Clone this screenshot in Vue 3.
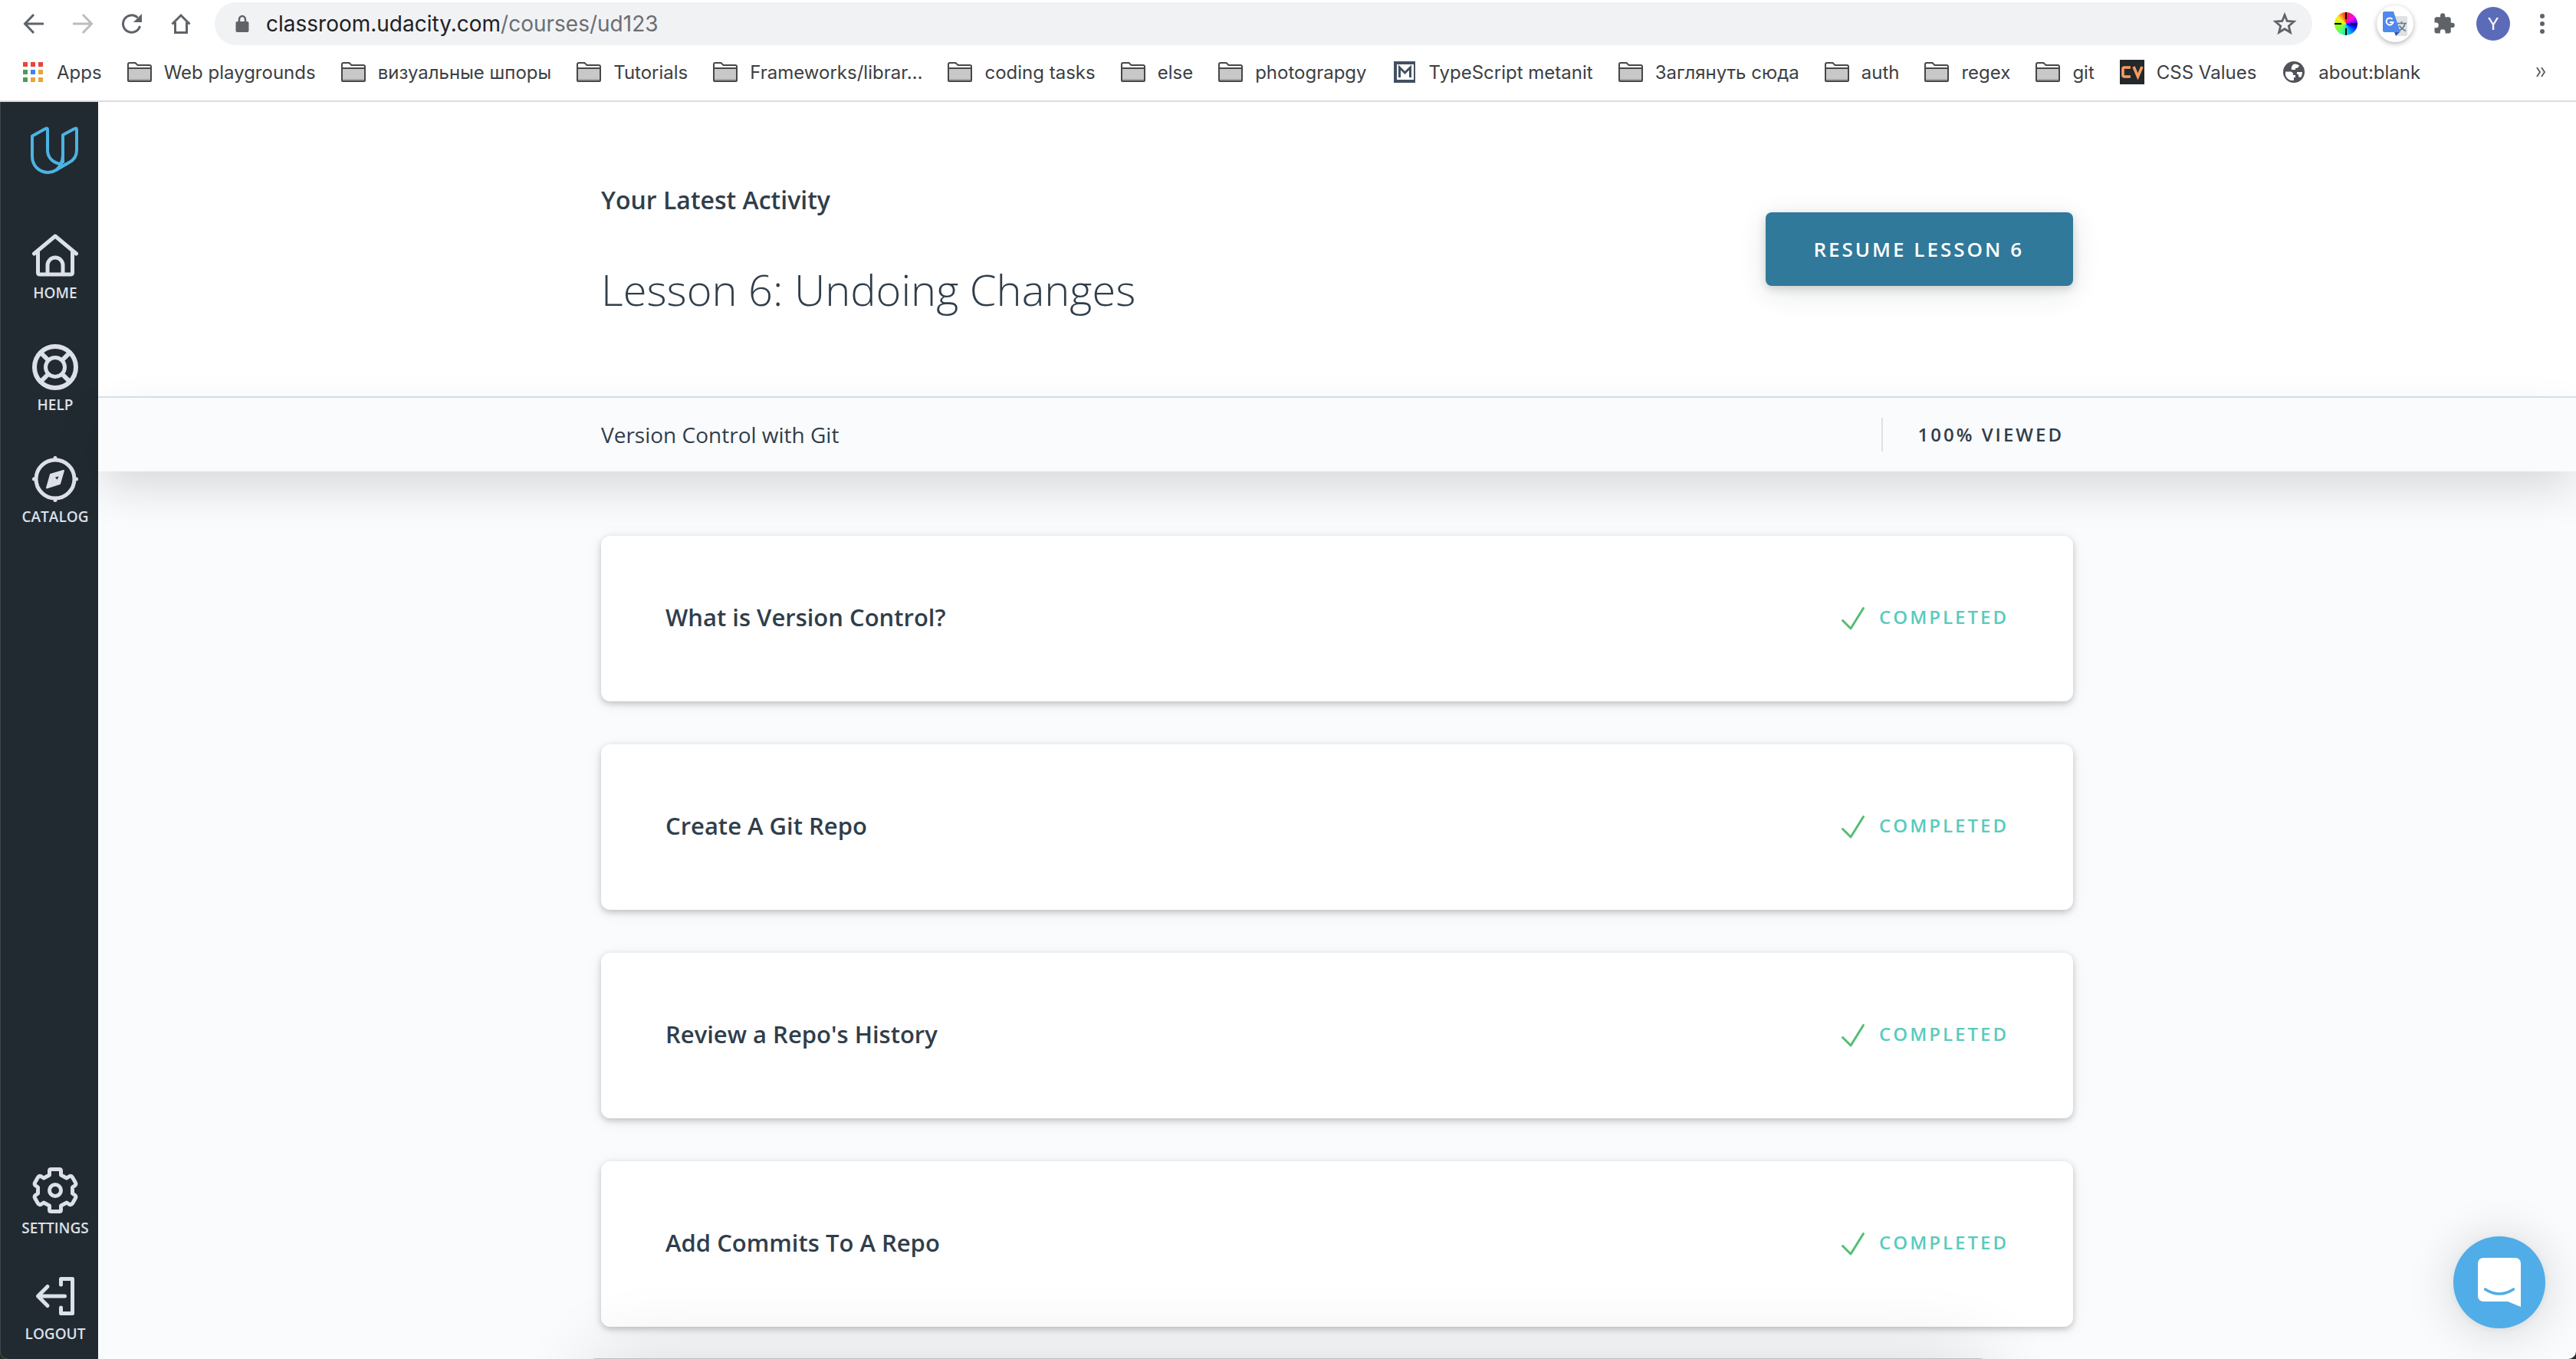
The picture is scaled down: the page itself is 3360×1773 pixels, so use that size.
<script setup>
const bookmarks = [
  { label: 'Apps', icon: 'apps' },
  { label: 'Web playgrounds', icon: 'folder' },
  { label: 'визуальные шпоры', icon: 'folder' },
  { label: 'Tutorials', icon: 'folder' },
  { label: 'Frameworks/librar…', icon: 'folder' },
  { label: 'coding tasks', icon: 'folder' },
  { label: 'else', icon: 'folder' },
  { label: 'photograpgy', icon: 'folder' },
  { label: 'TypeScript metanit', icon: 'metanit' },
  { label: 'Заглянуть сюда', icon: 'folder' },
  { label: 'auth', icon: 'folder' },
  { label: 'regex', icon: 'folder' },
  { label: 'git', icon: 'folder' },
  { label: 'CSS Values', icon: 'cv' },
  { label: 'about:blank', icon: 'globe' },
]

const appDots = ['#e8453c', '#e8453c', '#e8453c', '#4b9b5b', '#3b83ee', '#e6a537', '#4b9b5b', '#e6a537', '#e6a537']

const lessons = [
  'What is Version Control?',
  'Create A Git Repo',
  "Review a Repo's History",
  'Add Commits To A Repo',
]
</script>

<template>
  <div class="window">
    <header class="browser">
      <div class="toolbar">
        <button class="tool" aria-label="Back">
          <svg width="28" height="28" viewBox="0 0 28 28" class="line"><path d="M27 14H3M14 2L2.500 14L14 26" /></svg>
        </button>
        <button class="tool faded" aria-label="Forward">
          <svg width="28" height="28" viewBox="0 0 28 28" class="line"><path d="M1 14H25M14 2L25.500 14L14 26" /></svg>
        </button>
        <button class="tool" aria-label="Reload">
          <svg width="28" height="28" viewBox="0 0 28 28"><path d="M24.500 17A11.200 11.200 0 1 1 21.500 6" fill="none" stroke="currentColor" stroke-width="3" /><path d="M27 1V12H16Z" fill="currentColor" /></svg>
        </button>
        <button class="tool" aria-label="Home page">
          <svg width="28" height="28" viewBox="0 0 28 28" class="line"><path d="M2.500 14.500L14 3L25.500 14.500M6.500 12V25.500H21.500V12" /></svg>
        </button>
        <button class="address">
          <svg width="18" height="24" viewBox="0 0 18 24"><path d="M5 10V6.500a4 4.500 0 0 1 8 0V10" fill="none" stroke="#5f6368" stroke-width="2.500" /><rect x="0.500" y="9" width="17" height="14" rx="2" fill="#5f6368" /></svg>
          <span class="url">classroom.udacity.com<span class="path">/courses/ud123</span></span>
          <svg width="32" height="32" viewBox="0 0 32 32"><path d="M16 4.500L19.200 12.500L28 13.200L21.300 18.900L23.400 27.300L16 22.700L8.600 27.300L10.700 18.900L4 13.200L12.800 12.500Z" fill="none" stroke="#5f6368" stroke-width="2.800" /></svg>
        </button>
        <button class="tool" aria-label="Color picker">
          <span class="wheel"><svg width="30" height="30" viewBox="0 0 30 30"><path d="M15 0V9M15 21V30M0 15H9M21 15H30" stroke="#000" stroke-width="2" /></svg></span>
        </button>
        <button class="tool" aria-label="Translate">
          <span class="translate">
            <svg width="32" height="32" viewBox="0 0 32 32">
              <path d="M12 6H30a2 2 0 0 1 2 2V30a2 2 0 0 1-2 2H17Z" fill="#dfe1e4" />
              <path d="M19 15.500H31M24.500 13V15.500M29 15.500C28 20 24.500 23.500 20.500 25.500M21.500 18.500C23.500 21.500 26.500 24 30 25.500" fill="none" stroke="#607d8b" stroke-width="1.700" />
              <path d="M15 27H22L17 32Z" fill="#3355b5" />
              <path d="M2 0H14L23 27H2a2 2 0 0 1-2-2V2a2 2 0 0 1 2-2Z" fill="#5089ec" />
              <path d="M12.500 10A4.500 4.500 0 1 0 13.500 14H9" fill="none" stroke="#fff" stroke-width="2" />
            </svg>
          </span>
        </button>
        <button class="tool" aria-label="Extensions">
          <svg width="30" height="30" viewBox="0 0 24 24"><path fill="currentColor" d="M20.500 11H19V7c0-1.100-.9-2-2-2h-4V3.500a2.500 2.500 0 0 0-5 0V5H4c-1.100 0-2 .9-2 2v3.800h1.500a2.700 2.700 0 0 1 0 5.400H2V20c0 1.100.9 2 2 2h3.800v-1.500a2.700 2.700 0 0 1 5.400 0V22H17c1.100 0 2-.9 2-2v-4h1.500a2.500 2.500 0 0 0 0-5z" /></svg>
        </button>
        <button class="tool" aria-label="Profile"><span class="avatar">Y</span></button>
        <button class="tool" aria-label="Menu">
          <svg width="8" height="28" viewBox="0 0 8 28" fill="currentColor"><circle cx="4" cy="4" r="3" /><circle cx="4" cy="14" r="3" /><circle cx="4" cy="24" r="3" /></svg>
        </button>
      </div>
      <nav class="bookmarks" aria-label="Bookmarks">
        <a v-for="b in bookmarks" :key="b.label" href="#" class="bookmark">
          <svg v-if="b.icon === 'apps'" width="28" height="26" viewBox="0 0 28 26">
            <rect v-for="(c, i) in appDots" :key="i" :x="(i % 3) * 10" :y="Math.floor(i / 3) * 10" width="6" height="6" :fill="c" />
          </svg>
          <svg v-else-if="b.icon === 'folder'" width="32" height="26" viewBox="0 0 32 26">
            <path d="M1 24V3Q1 1 3 1H10.500L13.500 4H29Q31 4 31 6V24Q31 25 30 25H2Q1 25 1 24Z" fill="#fff" stroke="#474747" stroke-width="2" />
            <rect x="2" y="9" width="28" height="13" fill="#c8c8c8" /><rect x="2" y="22" width="28" height="2" fill="#a5a5a5" />
            <path d="M1 8H31" stroke="#474747" stroke-width="2" />
          </svg>
          <svg v-else-if="b.icon === 'metanit'" width="32" height="28" viewBox="0 0 32 28">
            <path fill-rule="evenodd" d="M2 0H30V28H2ZM6 4V24H28V4Z" fill="#445062" />
            <path d="M9.500 21V8L16.500 15L23.500 8V21" fill="none" stroke="#445062" stroke-width="3" />
          </svg>
          <svg v-else-if="b.icon === 'cv'" width="32" height="32" viewBox="0 0 32 32">
            <rect width="32" height="32" fill="#23282a" />
            <path d="M14 10H6Q4 10 4 12V20Q4 22 6 22H14M18 9L23.500 22L29 9" fill="none" stroke="#f79a62" stroke-width="3.600" />
          </svg>
          <svg v-else width="32" height="28" viewBox="0 0 32 28">
            <circle cx="16" cy="14" r="14" fill="#50535a" />
            <path d="M5 13.500H12Q15 14 15 17V18H18V21H16V25Q8 26 5 18ZM16 3.500Q20 3 23 5.500Q22 9 18 9V11H13Q12 6 16 3.500ZM20 14H27Q27 18 25 21L22 20V17H20Z" fill="#fff" />
          </svg>
          <span>{{ b.label }}</span>
        </a>
        <button class="more" aria-label="More bookmarks">
          <svg width="12" height="16" viewBox="0 0 12 16"><path d="M1 2L5 8L1 14M7 2L11 8L7 14" fill="none" stroke="#5f6368" stroke-width="2" /></svg>
        </button>
      </nav>
    </header>

    <div class="page">
      <aside class="sidebar">
        <a href="#" class="logo" aria-label="Udacity">
          <svg width="64" height="62" viewBox="40 165 64 62" fill="none" stroke="#4cb3e3" stroke-width="4" stroke-linejoin="round">
            <path d="M82 213V176L97 168Q100 166.500 100 169V196C100 204 96 209 90 212L73 222Q68 225 63 225C51 225 42 216 42 204V177.500L59 168Q62 166.500 62 169V196C62 206 70 214 82 214" />
            <path d="M82 202C82 211 79 217 73 222" />
          </svg>
        </a>
        <nav class="group">
          <a href="#" class="item">
            <svg width="60" height="60" viewBox="42 303 60 60"><path d="M44.500 331L72 308L99.500 331M49.500 329V355.500Q49.500 358 52 358H92Q94.500 358 94.500 355.500V329M62 358V346A10 10 0 0 1 82 346V358" /></svg>
            <span>HOME</span>
          </a>
          <a href="#" class="item">
            <svg width="60" height="60" viewBox="0 0 60 60"><circle cx="30" cy="30" r="27" stroke-width="6" /><circle cx="30" cy="30" r="12.500" /><path stroke-width="6" stroke-linecap="butt" d="M11 11L21 21M49 11L39 21M11 49L21 39M49 49L39 39" /></svg>
            <span>HELP</span>
          </a>
          <a href="#" class="item">
            <svg width="60" height="60" viewBox="0 0 60 60"><circle cx="30" cy="30" r="25" /><path d="M30 2.500V4M30 56V57.500M2.500 30H4M56 30H57.500" /><path class="solid" stroke-width="2" fill-rule="evenodd" d="M24 24L41 19L36 36L19 41.500ZM28 27.500L33 32.500L36.500 24.500Z" /></svg>
            <span>CATALOG</span>
          </a>
        </nav>
        <nav class="group bottom">
          <a href="#" class="item">
            <svg width="60" height="60" viewBox="42 1523 60 60"><path d="M64.500 1527.500Q64.500 1525.500 66.500 1525.500H77.500Q79.500 1525.500 79.500 1527.500V1533L87 1537L90 1535Q93 1533.500 94.500 1536L98.500 1543Q99.500 1545 98 1546.500L94.500 1549V1557L98 1559.500Q99.500 1561 98.500 1563L94.500 1570Q93 1572.500 90 1571L87 1569L79.500 1573V1578.500Q79.500 1580.500 77.500 1580.500H66.500Q64.500 1580.500 64.500 1578.500V1573L57 1569L54 1571Q51 1572.500 49.500 1570L45.500 1563Q44.500 1561 46 1559.500L49.500 1557V1549L46 1546.500Q44.500 1545 45.500 1543L49.500 1536Q51 1533.500 54 1535L57 1537L64.500 1533Z" /><circle cx="72" cy="1553" r="7.500" /></svg>
            <span>SETTINGS</span>
          </a>
          <a href="#" class="item">
            <svg width="60" height="60" viewBox="42 1661 60 60"><path d="M79.500 1676V1668.500H94.500V1713.500H79.500V1706M84.500 1691H50M62 1678.500L49.500 1691L62 1703.500" /></svg>
            <span>LOGOUT</span>
          </a>
        </nav>
      </aside>

      <main class="main">
        <section class="hero">
          <div class="hero-inner">
            <div class="activity">
              <h2>Your Latest Activity</h2>
              <h1>Lesson 6: Undoing Changes</h1>
            </div>
            <button class="resume">RESUME LESSON 6</button>
          </div>
        </section>
        <section class="course">
          <div class="course-inner">
            <span class="course-name">Version Control with Git</span>
            <span class="viewed">100% VIEWED</span>
          </div>
        </section>
        <section class="lessons">
          <a v-for="lesson in lessons" :key="lesson" href="#" class="card">
            <h3>{{ lesson }}</h3>
            <span class="status">
              <svg width="32" height="32" viewBox="0 0 32 32"><path d="M2.500 18.500L13 29L29.500 2.500" fill="none" stroke="#55bd74" stroke-width="3" stroke-linecap="round" stroke-linejoin="round" /></svg>
              <span class="state">COMPLETED</span>
            </span>
          </a>
        </section>
      </main>
    </div>

    <div class="dock-shadow"></div>
    <button class="chat" aria-label="Open chat">
      <svg width="56" height="64" viewBox="0 0 56 64"><path d="M7 0H49a7 7 0 0 1 7 7V64L39 57H7a7 7 0 0 1-7-7V7a7 7 0 0 1 7-7Z" fill="#fff" /><path d="M9.500 41Q28 53 46.500 41" fill="none" stroke="#50ade7" stroke-width="3.500" stroke-linecap="round" /></svg>
    </button>
  </div>
</template>

<style>
body {
  background: #262b20;
}
</style>

<style scoped>
.window {
  box-sizing: border-box;
  min-height: 100vh;
  display: flex;
  flex-direction: column;
  position: relative;
  overflow: hidden;
  border-radius: 0 0 10px 10px;
  background: #fafbfd;
  font-family: "Open Sans", sans-serif;
  color: #303e4b;
}

button {
  border: 0;
  padding: 0;
  background: none;
  font: inherit;
  color: inherit;
  cursor: pointer;
}

a {
  color: inherit;
  text-decoration: none;
}

h1,
h2,
h3 {
  margin: 0;
}

svg {
  display: block;
  flex: none;
}

/* Browser chrome */
.browser {
  background: #fff;
  border-bottom: 2px solid #dcdce1;
  padding-bottom: 5px;
  font-family: Inter, "Liberation Sans", sans-serif;
}

.toolbar {
  display: flex;
  align-items: center;
  height: 62px;
  padding: 0 12px;
}

.tool {
  display: flex;
  align-items: center;
  justify-content: center;
  flex: none;
  width: 64px;
  height: 56px;
  color: #5f6368;
}

.tool.faded {
  color: #bbbdbf;
}

.line {
  fill: none;
  stroke: currentColor;
  stroke-width: 3;
}

.address {
  display: flex;
  align-items: center;
  flex: 1;
  height: 56px;
  margin: 0 12px;
  padding: 0 20px 0 27px;
  border-radius: 28px;
  background: #f1f2f4;
  font-size: 28px;
  color: #202124;
  text-align: left;
}

.url {
  flex: 1;
  margin-left: 22px;
}

.path {
  color: #6b6e72;
}

.wheel {
  width: 30px;
  height: 30px;
  border-radius: 50%;
  background: conic-gradient(#f22, #f0f, #00f, #0af, #4f8, #9f2, #fe2, #f22);
}

.translate {
  display: flex;
  align-items: center;
  justify-content: center;
  width: 48px;
  height: 48px;
  border-radius: 50%;
  background: #fff;
  box-shadow: 0 2px 6px rgba(0, 0, 0, 0.3);
}

.avatar {
  width: 44px;
  border-radius: 50%;
  background: #5c6bb8;
  color: #fff;
  font-size: 22px;
  line-height: 44px;
  text-align: center;
}

.bookmarks {
  display: flex;
  align-items: center;
  gap: 33px;
  height: 64px;
  padding: 0 40px 0 30px;
  font-size: 24px;
  color: #3c4043;
}

.bookmark {
  display: flex;
  align-items: center;
  gap: 16px;
  white-space: nowrap;
}

.more {
  margin-left: auto;
}

/* Page */
.page {
  flex: 1;
  display: flex;
}

.sidebar {
  box-sizing: border-box;
  flex: none;
  width: 128px;
  display: flex;
  flex-direction: column;
  align-items: center;
  padding: 32px 0 19px 15px;
  border-left: 1px solid #3c444c;
  background: #222a31;
  color: #dce0e9;
}

.group {
  display: flex;
  flex-direction: column;
  gap: 53px;
  margin-top: 76px;
}

.group.bottom {
  gap: 45px;
  margin-top: auto;
}

.item {
  display: flex;
  flex-direction: column;
  align-items: center;
  gap: 5px;
  font-size: 19px;
  font-weight: 600;
  line-height: 28px;
}

.item svg {
  fill: none;
  stroke: currentColor;
  stroke-width: 5;
  stroke-linecap: round;
  stroke-linejoin: round;
}

.item .solid {
  fill: currentColor;
}

.main {
  flex: 1;
  min-width: 0;
}

.hero {
  padding: 0 40px;
  background: #fff;
  border-bottom: 2px solid #dbe2e8;
}

.hero-inner,
.course-inner,
.lessons {
  max-width: 1920px;
  margin: 0 auto;
}

.hero-inner {
  display: flex;
  align-items: center;
  justify-content: space-between;
  min-height: 384px;
}

.activity {
  padding-top: 2px;
}

.activity h2 {
  margin-bottom: 54px;
  font-size: 32px;
  font-weight: 600;
  line-height: 48px;
}

.activity h1 {
  font-size: 56px;
  font-weight: 300;
  line-height: 76px;
}

.resume {
  height: 96px;
  padding: 0 64px 0 62px;
  border-radius: 8px;
  background: #31799a;
  box-shadow: 0 4px 12px rgba(20, 40, 30, 0.16), 0 8px 36px rgba(20, 40, 30, 0.12);
  color: #fff;
  font-size: 26px;
  font-weight: 600;
  letter-spacing: 3px;
}

.course {
  padding: 0 40px;
  background: #fafbfd;
  box-shadow: 0 24px 60px -4px rgba(0, 0, 0, 0.14);
}

.course-inner {
  display: flex;
  align-items: center;
  justify-content: space-between;
  height: 96px;
}

.course-name {
  font-size: 28px;
}

.viewed {
  padding: 0 12px 0 46px;
  border-left: 2px solid #dbe2e8;
  font-size: 24px;
  font-weight: 600;
  line-height: 44px;
  letter-spacing: 3px;
}

.lessons {
  display: flex;
  flex-direction: column;
  gap: 56px;
  padding: 84px 0 40px;
}

.card {
  display: flex;
  align-items: center;
  justify-content: space-between;
  height: 216px;
  padding: 0 84px;
  border-radius: 12px;
  background: #fff;
  box-shadow: 0 3px 8px rgba(0, 0, 0, 0.22), 0 4px 24px rgba(0, 0, 0, 0.05);
}

.card h3,
.state {
  padding-bottom: 4px;
}

.card h3 {
  font-size: 31px;
  font-weight: 600;
}

.status {
  display: flex;
  align-items: center;
  gap: 18px;
  color: #58cbbd;
  font-size: 24px;
  font-weight: 600;
  line-height: 32px;
  letter-spacing: 3px;
}

/* Overlays */
.dock-shadow {
  position: absolute;
  right: 23%;
  bottom: -199px;
  left: 23%;
  height: 200px;
  border-radius: 4px;
  background: #bfbfbf;
  box-shadow: 0 0 100px rgba(0, 0, 0, 0.14);
}

.chat {
  position: fixed;
  right: 40px;
  bottom: 40px;
  display: flex;
  align-items: center;
  justify-content: center;
  width: 120px;
  height: 120px;
  border-radius: 50%;
  background: #50ade7;
  box-shadow: 0 2px 12px rgba(0, 0, 0, 0.06), 0 4px 64px rgba(0, 0, 0, 0.16);
}
</style>
